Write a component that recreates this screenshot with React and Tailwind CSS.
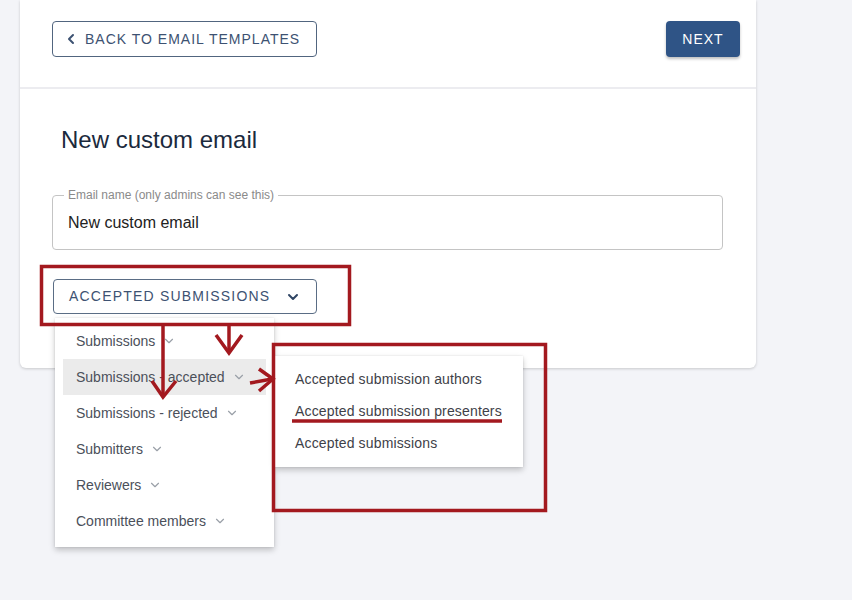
import { ChevronDown, ChevronLeft } from "lucide-react";

const groups = [
  "Submissions",
  "Submissions - accepted",
  "Submissions - rejected",
  "Submitters",
  "Reviewers",
  "Committee members",
];

const accepted = [
  "Accepted submission authors",
  "Accepted submission presenters",
  "Accepted submissions",
];

const Annotations = () => (
  <svg
    className="absolute left-0 top-0 pointer-events-none"
    width="852"
    height="600"
    viewBox="0 0 852 600"
    fill="none"
    stroke="#a3191f"
    strokeWidth="3.5"
  >
    <rect x="41.5" y="266.5" width="308" height="58" />
    <rect x="273.5" y="344.5" width="272" height="166" />
    <line x1="292" y1="421" x2="502" y2="421" />
    {/* arrow down to submenu */}
    <line x1="229" y1="326" x2="229" y2="352" />
    <polyline points="216,335 229,353 242,335" />
    {/* arrow down through items */}
    <line x1="163" y1="326" x2="163" y2="396" />
    <polyline points="152,381 163,397 176,381" />
    {/* arrow right */}
    <line x1="250" y1="383" x2="272" y2="379" />
    <polyline points="259,369 273,379 259,391" />
  </svg>
);

const App = () => {
  return (
    <div className="relative h-[600px] w-[852px] overflow-hidden bg-[#f3f4f8] font-['Liberation_Sans',Arial,sans-serif]">
      <div className="ml-5 w-[736px] rounded-b-md bg-white shadow-[0_1px_3px_rgba(0,0,0,0.18)]">
        <div className="flex h-[89px] items-start justify-between border-b-2 border-[#ececf0] pl-8 pr-4 pt-[21px]">
          <button className="flex h-[36px] w-[265px] items-center gap-[6px] rounded border border-[#51657f] pl-[10px] text-[14px] tracking-[1px] text-[#3d5272]">
            <ChevronLeft size={16} strokeWidth={3} />
            BACK TO EMAIL TEMPLATES
          </button>
          <button className="h-[36px] w-[74px] rounded bg-[#2f5486] text-[14px] tracking-[1px] text-white shadow-[0_2px_3px_rgba(0,0,0,0.25)]">
            NEXT
          </button>
        </div>
        <div className="pl-8 pr-[33px] pb-[54px]">
          <h1 className="pl-[9px] pt-[35px] text-[24px] leading-[32px] text-[#1b2a3d]">
            New custom email
          </h1>
          <div className="relative mt-[39px] flex h-[55px] items-center rounded border border-[#c4c4c4] pl-[15px] text-[16px] text-[#222]">
            <span className="absolute -top-[8px] left-[11px] bg-white px-[4px] text-[12px] leading-[14px] text-[#8a8a8a]">
              Email name (only admins can see this)
            </span>
            New custom email
          </div>
          <button className="mt-[29px] ml-px flex h-[35px] w-[264px] items-center gap-[15px] rounded border border-[#5a6d85] pl-[15px] text-[14px] tracking-[1.2px] text-[#3d5272]">
            ACCEPTED SUBMISSIONS
            <ChevronDown size={16} strokeWidth={3} className="text-[#2f4564]" />
          </button>
        </div>
      </div>

      <div className="absolute left-[55px] top-[318px] w-[219px] bg-white px-2 pb-[8px] pt-[5px] shadow-[0_3px_6px_rgba(0,0,0,0.22),0_0_2px_rgba(0,0,0,0.1)]">
        {groups.map((g, i) => (
          <div
            key={g}
            className={`flex h-[36px] items-center gap-[7px] pl-[13px] text-[14px] text-[#4b505a] ${
              i === 1 ? "bg-[#ebebeb]" : ""
            }`}
          >
            {g}
            <ChevronDown size={14} strokeWidth={2} className="text-[#9aa0a8]" />
          </div>
        ))}
      </div>

      <div className="absolute left-[275px] top-[356px] w-[248px] bg-white pb-[8px] pt-[7px] shadow-[0_3px_6px_rgba(0,0,0,0.22),0_0_2px_rgba(0,0,0,0.1)]">
        {accepted.map((a) => (
          <div
            key={a}
            className="flex h-[32px] items-center pl-[20px] text-[14px] tracking-[0.15px] text-[#3e4148]"
          >
            {a}
          </div>
        ))}
      </div>

      <Annotations />
    </div>
  );
};

export default App;
